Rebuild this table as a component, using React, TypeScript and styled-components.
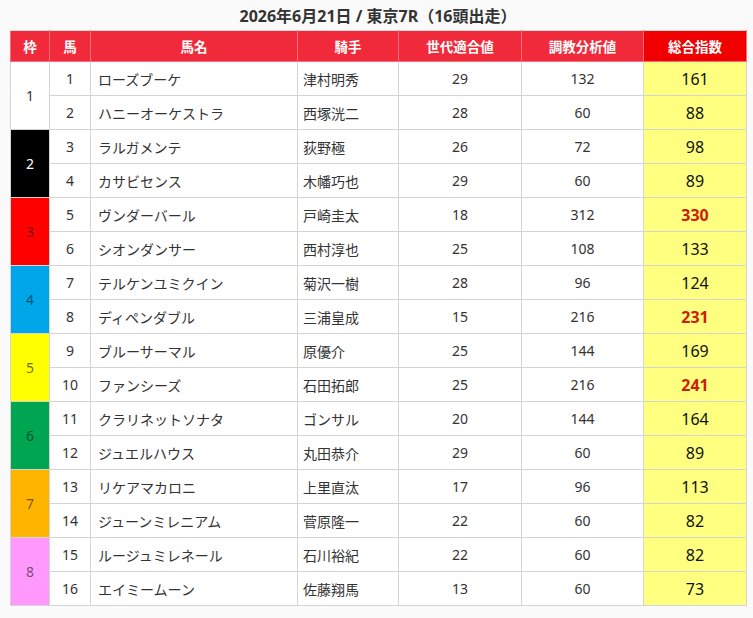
import { FC } from "react";
import styled, { createGlobalStyle } from "styled-components";

const GlobalStyle = createGlobalStyle`
  html, body {
    margin: 0;
    padding: 0;
    background: #fafafa;
  }
  body {
    font-family: "Noto Sans", "Noto Sans CJK JP", sans-serif;
    color: #333;
  }
`;

const Page = styled.div`
  padding: 0 7px 0 10px;
`;

const Title = styled.h2`
  margin: 0;
  height: 30px;
  line-height: 32px;
  font-size: 16px;
  font-weight: bold;
  text-align: center;
  color: #333;
`;

const Table = styled.table`
  width: 736px;
  border-collapse: collapse;
  table-layout: fixed;
  background: #fff;
`;

const Col = styled.col<{ $w: number }>`
  width: ${(p) => p.$w}px;
`;

const Head = styled.th<{ $accent?: boolean }>`
  height: 30px;
  padding: 0;
  background: ${(p) => (p.$accent ? "#f00000" : "#f02a3b")};
  color: #fff;
  font-size: 13.5px;
  font-weight: bold;
  border: 1px solid #f66f78;
  border-top: 1px solid #d9d9d9;
  text-align: center;
  white-space: nowrap;
`;

const Cell = styled.td<{ $left?: boolean }>`
  height: 33px;
  padding: 0 ${(p) => (p.$left ? "5px" : "0")};
  border: 1px solid #d4d4d4;
  font-size: 14px;
  color: #333;
  text-align: ${(p) => (p.$left ? "left" : "center")};
  white-space: nowrap;
  overflow: hidden;
`;

const NameCell = styled(Cell)`
  padding-left: 7px;
`;

const FrameCell = styled.td<{ $bg: string; $fg: string }>`
  padding: 0;
  border: 1px solid #d4d4d4;
  background: ${(p) => p.$bg};
  color: ${(p) => p.$fg};
  font-size: 14px;
  text-align: center;
`;

const ScoreCell = styled.td<{ $hot?: boolean }>`
  padding: 0;
  border: 1px solid #d4d4d4;
  background: #ffff80;
  color: ${(p) => (p.$hot ? "#d01c0b" : "#111")};
  font-size: 16px;
  font-weight: ${(p) => (p.$hot ? "bold" : "normal")};
  text-align: center;
`;

interface Horse {
  no: number;
  name: string;
  jockey: string;
  gen: number;
  train: number;
  total: number;
}

const frames = [
  { bg: "#ffffff", fg: "#333" },
  { bg: "#000000", fg: "#fff" },
  { bg: "#ff0000", fg: "rgba(0,0,0,0.55)" },
  { bg: "#00a7e8", fg: "rgba(0,0,0,0.55)" },
  { bg: "#ffff00", fg: "rgba(0,0,0,0.6)" },
  { bg: "#00a551", fg: "rgba(0,0,0,0.55)" },
  { bg: "#ffb400", fg: "rgba(0,0,0,0.55)" },
  { bg: "#ff99fe", fg: "rgba(0,0,0,0.55)" },
];

const widths = [39, 41, 207, 101, 123, 122, 103];

const horses: Horse[] = [
  { no: 1, name: "ローズブーケ", jockey: "津村明秀", gen: 29, train: 132, total: 161 },
  { no: 2, name: "ハニーオーケストラ", jockey: "西塚洸二", gen: 28, train: 60, total: 88 },
  { no: 3, name: "ラルガメンテ", jockey: "荻野極", gen: 26, train: 72, total: 98 },
  { no: 4, name: "カサビセンス", jockey: "木幡巧也", gen: 29, train: 60, total: 89 },
  { no: 5, name: "ヴンダーバール", jockey: "戸崎圭太", gen: 18, train: 312, total: 330 },
  { no: 6, name: "シオンダンサー", jockey: "西村淳也", gen: 25, train: 108, total: 133 },
  { no: 7, name: "テルケンユミクイン", jockey: "菊沢一樹", gen: 28, train: 96, total: 124 },
  { no: 8, name: "ディペンダブル", jockey: "三浦皇成", gen: 15, train: 216, total: 231 },
  { no: 9, name: "ブルーサーマル", jockey: "原優介", gen: 25, train: 144, total: 169 },
  { no: 10, name: "ファンシーズ", jockey: "石田拓郎", gen: 25, train: 216, total: 241 },
  { no: 11, name: "クラリネットソナタ", jockey: "ゴンサル", gen: 20, train: 144, total: 164 },
  { no: 12, name: "ジュエルハウス", jockey: "丸田恭介", gen: 29, train: 60, total: 89 },
  { no: 13, name: "リケアマカロニ", jockey: "上里直汰", gen: 17, train: 96, total: 113 },
  { no: 14, name: "ジューンミレニアム", jockey: "菅原隆一", gen: 22, train: 60, total: 82 },
  { no: 15, name: "ルージュミレネール", jockey: "石川裕紀", gen: 22, train: 60, total: 82 },
  { no: 16, name: "エイミームーン", jockey: "佐藤翔馬", gen: 13, train: 60, total: 73 },
];

const App: FC = () => {
  return (
    <Page>
      <GlobalStyle />
      <Title>2026年6月21日 / 東京7R（16頭出走）</Title>
      <Table>
        <colgroup>
          {widths.map((w, i) => (
            <Col key={i} $w={w} />
          ))}
        </colgroup>
        <thead>
          <tr>
            <Head>枠</Head>
            <Head>馬</Head>
            <Head>馬名</Head>
            <Head>騎手</Head>
            <Head>世代適合値</Head>
            <Head>調教分析値</Head>
            <Head $accent>総合指数</Head>
          </tr>
        </thead>
        <tbody>
          {horses.map((h, i) => {
            const f = Math.floor(i / 2);
            return (
              <tr key={h.no}>
                {i % 2 === 0 && (
                  <FrameCell rowSpan={2} $bg={frames[f].bg} $fg={frames[f].fg}>
                    {f + 1}
                  </FrameCell>
                )}
                <Cell>{h.no}</Cell>
                <NameCell $left>{h.name}</NameCell>
                <Cell $left>{h.jockey}</Cell>
                <Cell>{h.gen}</Cell>
                <Cell>{h.train}</Cell>
                <ScoreCell $hot={h.total >= 200}>{h.total}</ScoreCell>
              </tr>
            );
          })}
        </tbody>
      </Table>
    </Page>
  );
};

export default App;
